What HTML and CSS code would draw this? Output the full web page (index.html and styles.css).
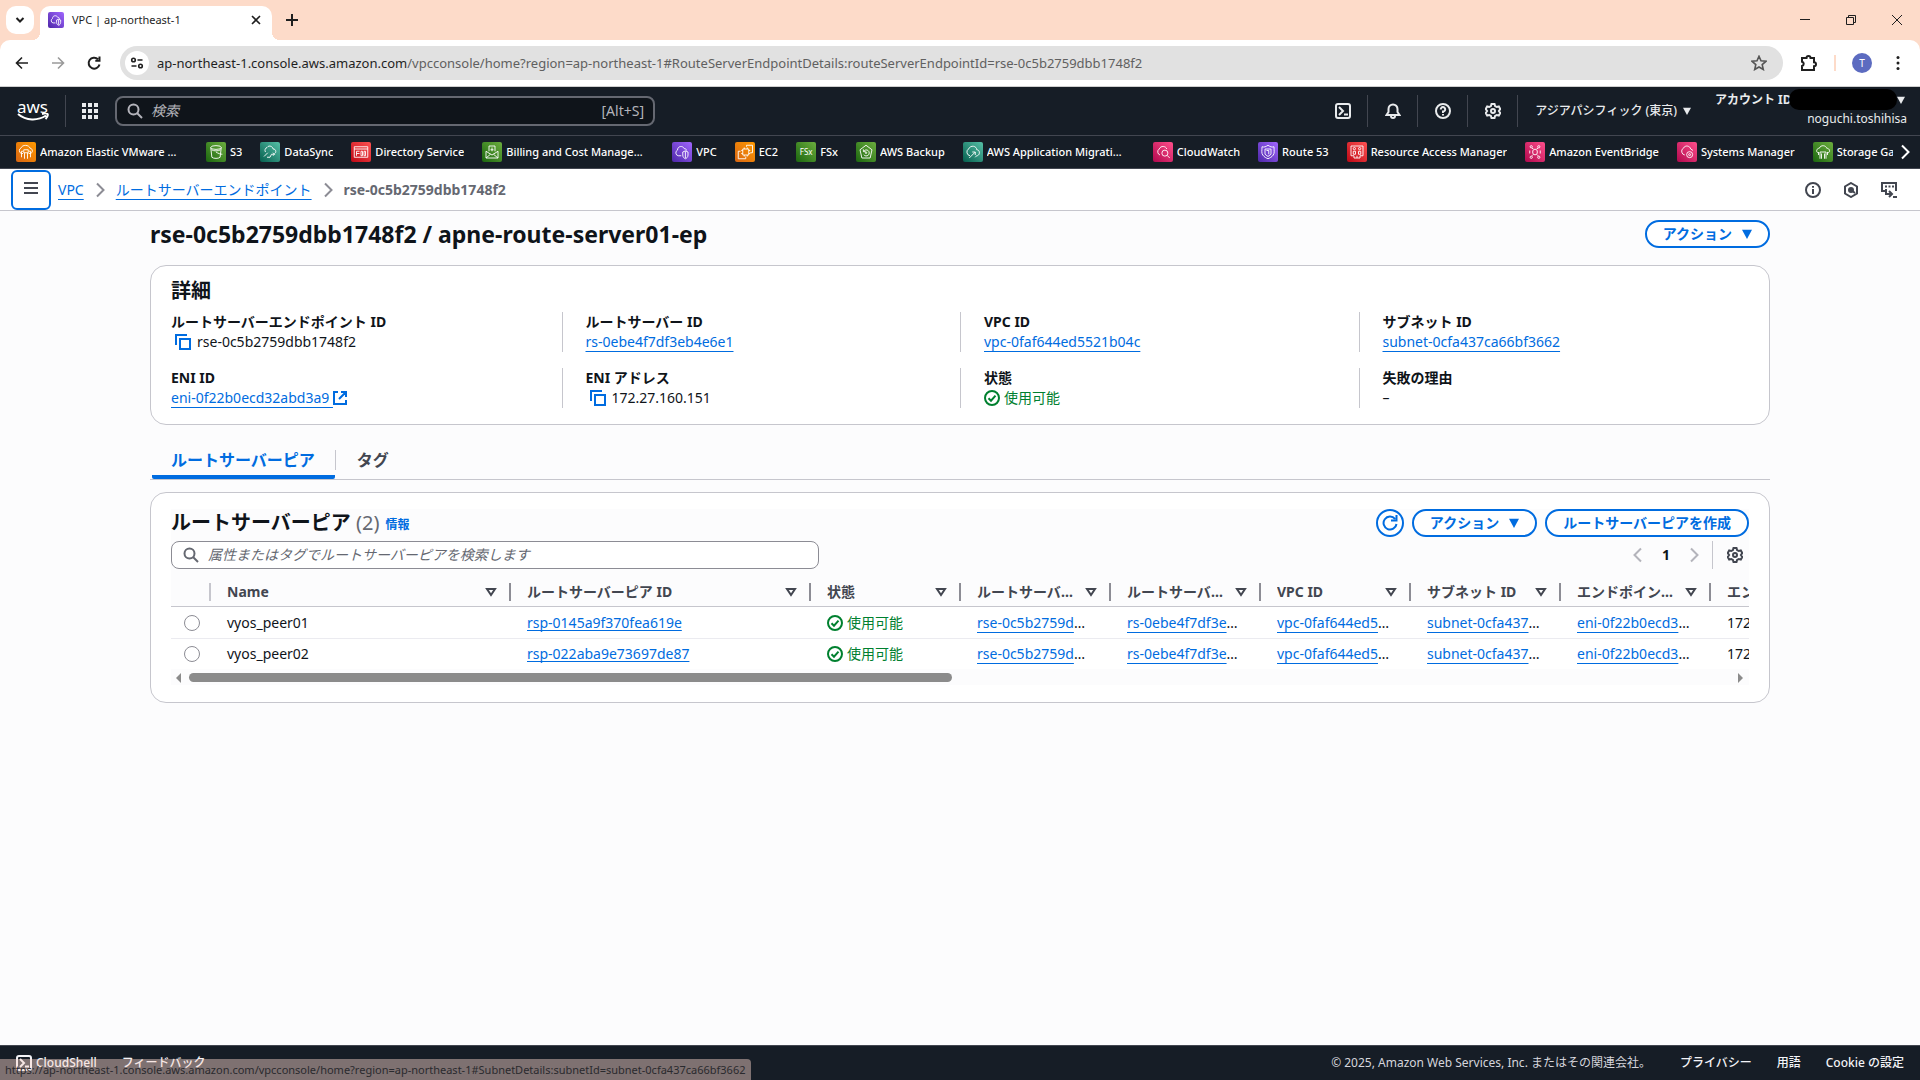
FILE: index.html
```html
<!DOCTYPE html>
<html lang="ja">
<head>
<meta charset="utf-8">
<title>VPC | ap-northeast-1</title>
<link rel="stylesheet" href="styles.css">
</head>
<body>
<svg class="defs" aria-hidden="true">
  <symbol id="search" viewBox="0 0 16 16"><circle cx="6.500" cy="6.500" r="5"/><path d="M10 10l5 5"/></symbol>
  <symbol id="copy" viewBox="0 0 16 16"><path d="M1 11V1h11M5 5h10v10H5z"/></symbol>
  <symbol id="check" viewBox="0 0 16 16"><circle cx="8" cy="8" r="7"/><path d="M4.500 8.200l2.500 2.500 4.500-5"/></symbol>
  <symbol id="gear" viewBox="0 0 16 16"><path d="M6.500 1h3l.6 2 1.700 1 2-.5 1.500 2.600L13.900 8l1.400 1.900-1.500 2.600-2-.5-1.700 1-.6 2h-3l-.6-2-1.700-1-2 .5L.7 9.900 2.100 8 .7 6.100l1.500-2.600 2 .5 1.700-1z"/><circle cx="8" cy="8" r="2"/></symbol>
  <symbol id="shell" viewBox="0 0 16 16"><rect x="1" y="1" width="14" height="14" rx="2"/><path d="M4 4l4 4-4 4M9 11.500h4"/></symbol>
  <symbol id="chev" viewBox="0 0 16 16"><path d="M5 1.500L11.500 8 5 14.500"/></symbol>
  <symbol id="filter" viewBox="0 0 16 16"><path d="M4 5h8L8 11z"/></symbol>
  <symbol id="down" viewBox="0 0 12 12"><path d="M0 1h12L6 12z" fill="currentColor" stroke="none"/></symbol>
  <symbol id="vpc" viewBox="0 0 24 24"><path d="M11 17H7a4 4 0 01-1-7.500C6 4 13 3 15 7.500c2 0 3 1 3 2.500M13 12l3.500-1.500L20 12v4c0 3-2 4.500-3.500 5-1.500-.5-3.500-2-3.500-5zM16.500 11v9"/></symbol>
</svg>

<header class="browser">
  <div class="tabstrip">
    <button class="tab-menu" aria-label="タブを検索"><svg class="i10" viewBox="0 0 10 10"><path d="M1.500 3L5 6.500 8.500 3"/></svg></button>
    <div class="tab">
      <span class="svc purple favicon"><svg viewBox="0 0 24 24"><use href="#vpc"/></svg></span>
      <span class="tab-title">VPC | ap-northeast-1</span>
      <button class="plain" aria-label="閉じる"><svg class="i10 fine" viewBox="0 0 10 10"><path d="M1 1l8 8M9 1L1 9"/></svg></button>
    </div>
    <button class="plain new-tab" aria-label="新しいタブ"><svg class="i12" viewBox="0 0 12 12"><path d="M6 0v12M0 6h12"/></svg></button>
    <div class="window-buttons">
      <button class="plain" aria-label="最小化"><svg class="i12 thin" viewBox="0 0 12 12"><path d="M1 5.500h10"/></svg></button>
      <button class="plain" aria-label="元に戻す"><svg class="i12 thin" viewBox="0 0 12 12"><path d="M1.500 3.500h7v7h-7zM3.500 3.500v-2h7v7h-2"/></svg></button>
      <button class="plain" aria-label="ウィンドウを閉じる"><svg class="i12 thin" viewBox="0 0 12 12"><path d="M1 1l10 10M11 1L1 11"/></svg></button>
    </div>
  </div>
  <div class="toolbar">
    <button class="plain" aria-label="戻る"><svg class="i16 fine" viewBox="0 0 16 16"><path d="M14 8H3M8 2.500L2.500 8 8 13.500"/></svg></button>
    <button class="plain muted" aria-label="進む"><svg class="i16 fine" viewBox="0 0 16 16"><path d="M2 8h11M8 2.500L13.500 8 8 13.500"/></svg></button>
    <button class="plain" aria-label="再読み込み"><svg class="i16" viewBox="0 0 16 16"><path d="M13.500 9.500A5.500 5.500 0 1112 4.200M13.500 1.500v4.200H9.300"/></svg></button>
    <div class="omnibox">
      <span class="site-info"><svg class="i14 fine" viewBox="0 0 14 14"><circle cx="3.500" cy="4" r="1.800"/><path d="M7.500 4h5M1.500 10h5"/><circle cx="10.500" cy="10" r="1.800"/></svg></span>
      <span class="url">ap-northeast-1.console.aws.amazon.com<span class="url-path">/vpcconsole/home?region=ap-northeast-1#RouteServerEndpointDetails:routeServerEndpointId=rse-0c5b2759dbb1748f2</span></span>
      <button class="plain star" aria-label="ブックマーク"><svg class="i16 fine" viewBox="0 0 16 16"><path d="M8 1.300l2 4.500 4.900.5-3.700 3.300 1.100 4.900L8 12l-4.300 2.500 1.100-4.900L1.100 6.300 6 5.800z"/></svg></button>
    </div>
    <button class="plain" aria-label="拡張機能"><svg class="i18" viewBox="0 0 18 18"><path d="M2 4h4.500a2 2 0 014 0H14v4.300a2 2 0 010 4V16H2v-4a2.200 2.200 0 000-4.300z"/></svg></button>
    <span class="bar"></span>
    <span class="avatar">T</span>
    <button class="plain" aria-label="メニュー"><svg class="i16 solid" viewBox="0 0 16 16"><circle cx="8" cy="2.500" r="1.500"/><circle cx="8" cy="8" r="1.500"/><circle cx="8" cy="13.500" r="1.500"/></svg></button>
  </div>
</header>

<nav class="aws-nav">
  <a class="logo" href="#" aria-label="AWS"><span>aws</span><svg viewBox="0 0 32 9"><path d="M1 1c8 7 20 7 28 1.500M25 1c3-.8 5-.6 5.500 0s-.2 3-2 5"/></svg></a>
  <span class="rule"></span>
  <button class="plain apps" aria-label="サービス"><svg class="i16 solid" viewBox="0 0 16 16"><path d="M0 0h4v4H0zM6 0h4v4H6zM12 0h4v4h-4zM0 6h4v4H0zM6 6h4v4H6zM12 6h4v4h-4zM0 12h4v4H0zM6 12h4v4H6zM12 12h4v4h-4z"/></svg></button>
  <label class="nav-search"><svg class="i16"><use href="#search"/></svg><input type="text" placeholder="検索" aria-label="検索"><span>[Alt+S]</span></label>
  <div class="nav-tools">
    <button class="plain" aria-label="CloudShell"><svg class="i16"><use href="#shell"/></svg></button>
    <button class="plain" aria-label="通知"><svg class="i16" viewBox="0 0 16 16"><path d="M1.500 12h13L12.500 9V6a4.500 4.500 0 00-9 0v3zM6 13a2 2 0 004 0"/></svg></button>
    <button class="plain" aria-label="ヘルプ"><svg class="i16" viewBox="0 0 16 16"><circle cx="8" cy="8" r="7"/><path d="M5.800 6.500A2.200 2.200 0 118 8.500V10M8 11v1.600"/></svg></button>
    <button class="plain" aria-label="設定"><svg class="i16"><use href="#gear"/></svg></button>
  </div>
  <button class="plain region">アジアパシフィック (東京) <svg class="i8"><use href="#down"/></svg></button>
  <button class="plain account"><span class="account-id">アカウント ID<span class="mask"></span><svg class="i8"><use href="#down"/></svg></span><span class="user">noguchi.toshihisa</span></button>
</nav>

<nav class="favorites">
  <div class="fav-list">
  <a href="#"><span class="svc orange"><svg viewBox="0 0 24 24"><path d="M8 14H6a4 4 0 01-.5-7.500C7 2 16 2 17.500 7c4 .5 4 6.500 0 7h-2M9 9h6v4H9zM8 11H6v8M16 11h2v8M10 13v8M14 13v8"/></svg></span><span class="name long">Amazon Elastic VMware Service</span></a>
  <a href="#"><span class="svc green"><svg viewBox="0 0 24 24"><ellipse cx="12" cy="6" rx="7" ry="2.500"/><path d="M5 6l1.500 13c2 2 9 2 11 0L19 6M12 12c3 2 6 3 8.500 3M6 9c3 2 9 2 12 0"/></svg></span><span class="name">S3</span></a>
  <a href="#"><span class="svc teal"><svg viewBox="0 0 24 24"><path d="M6 12a4 4 0 012-6c3-4 8-1 8 2 4-.5 5 5 2 6M4 18l5-5M8 19h4l2-4h4M16 13l2 2-2 2"/></svg></span><span class="name">DataSync</span></a>
  <a href="#"><span class="svc red"><svg viewBox="0 0 24 24"><path d="M3 5h18v14H3zM3 8h18M6 11h4M6 14h4M6 11v6M12 11h2v6h-2zM16 11h2v6h-2z"/></svg></span><span class="name">Directory Service</span></a>
  <a href="#"><span class="svc green"><svg viewBox="0 0 24 24"><path d="M4 11v9h16v-9l-8 5zM4 20l6-5M20 20l-6-5M8 11V4h8v7M12 6v5M10 9h4"/></svg></span><span class="name long">Billing and Cost Management</span></a>
  <a href="#"><span class="svc purple"><svg viewBox="0 0 24 24"><use href="#vpc"/></svg></span><span class="name">VPC</span></a>
  <a href="#"><span class="svc orange"><svg viewBox="0 0 24 24"><path d="M9 8h8v8H9zM6 11H3v10h10v-3M14 5V3h8v10h-3M11 6v2M15 6v2M17 10h2M17 14h2M7 10h2M7 14h2M11 16v2M15 16v2"/></svg></span><span class="name">EC2</span></a>
  <a href="#"><span class="svc green fsx">FSx</span><span class="name">FSx</span></a>
  <a href="#"><span class="svc green"><svg viewBox="0 0 24 24"><path d="M12 3l8 6-2.500 11h-11L4 9zM9 11a4 4 0 110 4.500M8.500 8.500v3h3"/><circle cx="12" cy="13" r="1"/></svg></span><span class="name">AWS Backup</span></a>
  <a href="#"><span class="svc teal"><svg viewBox="0 0 24 24"><path d="M8 17a5 5 0 01-2-9c3-6 11-4 11 1 4 0 5 6 1 8M7 20l8-8M11 12h4v4M15 19l3-3"/></svg></span><span class="name long">AWS Application Migration Service</span></a>
  <a href="#"><span class="svc pink"><svg viewBox="0 0 24 24"><path d="M8 16a4.500 4.500 0 01-1-8c2-5 9-4 10 0"/><circle cx="14.500" cy="13.500" r="4"/><path d="M17.500 16.500L21 20"/></svg></span><span class="name">CloudWatch</span></a>
  <a href="#"><span class="svc purple"><svg viewBox="0 0 24 24"><path d="M4 5c3 1 5 0 8-2 3 2 5 3 8 2 0 6 1 8-1 11-2 3-5 4-7 5-2-1-5-2-7-5-2-3-1-5-1-11zM8 8h8v7l-4 3-4-3zM10 10h3v5"/></svg></span><span class="name">Route 53</span></a>
  <a href="#"><span class="svc red"><svg viewBox="0 0 24 24"><path d="M4 4h16v13h-4M4 4v13h4M7 11h3v4H7zM14 11h3v4h-3zM8 17v3h8v-3M12 17v3"/><circle cx="8.500" cy="7.500" r="1.500"/><circle cx="15.500" cy="7.500" r="1.500"/></svg></span><span class="name">Resource Access Manager</span></a>
  <a href="#"><span class="svc pink"><svg viewBox="0 0 24 24"><path d="M9 10l3-2 3 2v4l-3 2-3-2zM8 7l2 1M16 7l-2 1M8 17l2-2M16 17l-2-2M5 10v4M19 10v4"/><circle cx="7" cy="5" r="1.500"/><circle cx="17" cy="5" r="1.500"/><circle cx="7" cy="19" r="1.500"/><circle cx="17" cy="19" r="1.500"/></svg></span><span class="name">Amazon EventBridge</span></a>
  <a href="#"><span class="svc pink"><svg viewBox="0 0 24 24"><path d="M9 16a5 5 0 01-2-9c3-5 9-3 10 1l3 2"/><circle cx="15.500" cy="15.500" r="4"/><circle cx="15.500" cy="15.500" r="1.300"/></svg></span><span class="name">Systems Manager</span></a>
  <a href="#"><span class="svc green"><svg viewBox="0 0 24 24"><path d="M5 13c-3-2-1-6 2-6 2-5 9-4 10 0 4 0 5 5 2 6M8 21V12h8v9M10 14v7M14 14v7M6 12v4M18 12v4"/></svg></span><span class="name">Storage Gateway</span></a>
  </div>
  <button class="plain more" aria-label="さらに表示"><svg class="i16"><use href="#chev"/></svg></button>
</nav>

<div class="crumb-bar">
  <button class="side-toggle" aria-label="メニューを開く"><svg class="i16" viewBox="0 0 16 16"><path d="M1 3h14M1 8h14M1 13h14"/></svg></button>
  <ol class="crumbs">
    <li><a href="#">VPC</a><svg class="i16"><use href="#chev"/></svg></li>
    <li><a href="#">ルートサーバーエンドポイント</a><svg class="i16"><use href="#chev"/></svg></li>
    <li class="here">rse-0c5b2759dbb1748f2</li>
  </ol>
  <div class="crumb-tools">
    <button class="plain" aria-label="情報"><svg class="i16" viewBox="0 0 16 16"><circle cx="8" cy="8" r="7"/><path d="M8 7v5M8 4v1.800"/></svg></button>
    <button class="plain" aria-label="診断"><svg class="i16" viewBox="0 0 16 16"><path d="M8 1l6 3.500v7L8 15l-6-3.500v-7zM8 8l4 3"/><circle cx="8" cy="8" r="2" fill="currentColor"/></svg></button>
    <button class="plain" aria-label="コンソール"><svg class="i16" viewBox="0 0 16 16"><path d="M4 9H1V1h14v8M4 4.500h2M7.500 4.500h2M11 4.500h2M5 7v5h5M8 9l3 3-3 3M12 15h4"/></svg></button>
  </div>
</div>

<main>
  <div class="title-row">
    <h1>rse-0c5b2759dbb1748f2 / apne-route-server01-ep</h1>
    <button class="btn">アクション <svg class="i10"><use href="#down"/></svg></button>
  </div>

  <section class="card details">
    <h2>詳細</h2>
    <dl>
      <div><dt>ルートサーバーエンドポイント ID</dt><dd class="copyable"><svg class="i16"><use href="#copy"/></svg>rse-0c5b2759dbb1748f2</dd></div>
      <div><dt>ルートサーバー ID</dt><dd><a href="#">rs-0ebe4f7df3eb4e6e1</a></dd></div>
      <div><dt>VPC ID</dt><dd><a href="#">vpc-0faf644ed5521b04c</a></dd></div>
      <div><dt>サブネット ID</dt><dd><a href="#">subnet-0cfa437ca66bf3662</a></dd></div>
      <div><dt>ENI ID</dt><dd class="external"><a href="#">eni-0f22b0ecd32abd3a9&nbsp;</a><svg class="i14" viewBox="0 0 14 14"><path d="M5 1H1v12h12V9M8 1h5v5M13 1L6 8"/></svg></dd></div>
      <div><dt>ENI アドレス</dt><dd class="copyable"><svg class="i16"><use href="#copy"/></svg>172.27.160.151</dd></div>
      <div><dt>状態</dt><dd class="ok"><svg class="i16"><use href="#check"/></svg>使用可能</dd></div>
      <div><dt>失敗の理由</dt><dd>–</dd></div>
    </dl>
  </section>

  <div class="tabs" role="tablist">
    <button role="tab" aria-selected="true">ルートサーバーピア</button>
    <button role="tab" aria-selected="false">タグ</button>
  </div>

  <section class="card peers">
    <div class="peers-inner">
    <div class="peers-head">
      <h2>ルートサーバーピア <span class="count">(2)</span></h2>
      <a class="info" href="#">情報</a>
      <div class="actions">
        <button class="btn round" aria-label="更新"><svg class="i16" viewBox="0 0 16 16"><path d="M14.500 9A6.500 6.500 0 1113 3.800M14.500 0v5.500H9"/></svg></button>
        <button class="btn">アクション <svg class="i10"><use href="#down"/></svg></button>
        <button class="btn">ルートサーバーピアを作成</button>
      </div>
    </div>
    <div class="peers-tools">
      <label class="filter"><svg class="i16"><use href="#search"/></svg><input type="text" placeholder="属性またはタグでルートサーバーピアを検索します" aria-label="属性またはタグで検索"></label>
      <div class="pager">
        <button class="plain flip" aria-label="前へ"><svg class="i16"><use href="#chev"/></svg></button>
        <button class="plain page">1</button>
        <button class="plain" aria-label="次へ"><svg class="i16"><use href="#chev"/></svg></button>
        <button class="plain prefs" aria-label="設定"><svg class="i16"><use href="#gear"/></svg></button>
      </div>
    </div>
    <div class="table-wrap">
      <table>
        <colgroup><col class="c-pick"><col class="c-wide"><col class="c-wide"><col class="c-std" span="7"></colgroup>
        <thead><tr>
          <th aria-label="選択"><div class="hd first"></div></th>
          <th><div class="hd"><span>Name</span><svg class="i16"><use href="#filter"/></svg></div></th>
          <th><div class="hd"><span>ルートサーバーピア ID</span><svg class="i16"><use href="#filter"/></svg></div></th>
          <th><div class="hd"><span>状態</span><svg class="i16"><use href="#filter"/></svg></div></th>
          <th><div class="hd"><span>ルートサーバーエンドポイント ID</span><svg class="i16"><use href="#filter"/></svg></div></th>
          <th><div class="hd"><span>ルートサーバー ID</span><svg class="i16"><use href="#filter"/></svg></div></th>
          <th><div class="hd"><span>VPC ID</span><svg class="i16"><use href="#filter"/></svg></div></th>
          <th><div class="hd"><span>サブネット ID</span><svg class="i16"><use href="#filter"/></svg></div></th>
          <th><div class="hd"><span>エンドポイント ENI</span><svg class="i16"><use href="#filter"/></svg></div></th>
          <th><div class="hd"><span>エンドポイント ENI アドレス</span></div></th>
        </tr></thead>
        <tbody>
          <tr>
            <td class="pick"><input type="radio" name="peer" aria-label="vyos_peer01"></td>
            <td>vyos_peer01</td><td><a class="tight" href="#">rsp-0145a9f370fea619e</a></td>
            <td><span class="ok"><svg class="i16"><use href="#check"/></svg>使用可能</span></td>
            <td><a href="#">rse-0c5b2759dbb1748f2</a></td><td><a href="#">rs-0ebe4f7df3eb4e6e1</a></td><td><a href="#">vpc-0faf644ed5521b04c</a></td><td><a href="#">subnet-0cfa437ca66bf3662</a></td><td><a href="#">eni-0f22b0ecd32abd3a9</a></td><td>172.27.160.151</td>
          </tr>
          <tr>
            <td class="pick"><input type="radio" name="peer" aria-label="vyos_peer02"></td>
            <td>vyos_peer02</td><td><a class="tight" href="#">rsp-022aba9e73697de87</a></td>
            <td><span class="ok"><svg class="i16"><use href="#check"/></svg>使用可能</span></td>
            <td><a href="#">rse-0c5b2759dbb1748f2</a></td><td><a href="#">rs-0ebe4f7df3eb4e6e1</a></td><td><a href="#">vpc-0faf644ed5521b04c</a></td><td><a href="#">subnet-0cfa437ca66bf3662</a></td><td><a href="#">eni-0f22b0ecd32abd3a9</a></td><td>172.27.160.151</td>
          </tr>
        </tbody>
      </table>
    </div>
    <div class="scrollbar"><span class="arrow left"></span><div class="track"><div class="thumb"></div></div><span class="arrow right"></span></div>
    </div>
  </section>
</main>

<footer>
  <a class="shell" href="#"><svg class="i16"><use href="#shell"/></svg>CloudShell</a>
  <a href="#">フィードバック</a>
  <span class="copyright">© 2025, Amazon Web Services, Inc. またはその関連会社。</span>
  <a href="#">プライバシー</a>
  <a href="#">用語</a>
  <a href="#">Cookie の設定</a>
  <div class="status">https://ap-northeast-1.console.aws.amazon.com/vpcconsole/home?region=ap-northeast-1#SubnetDetails:subnetId=subnet-0cfa437ca66bf3662</div>
</footer>
</body>
</html>
```
FILE: styles.css
```css
* { box-sizing: border-box; }
body {
  margin: 0;
  min-height: 100vh;
  display: flex;
  flex-direction: column;
  background: #fcfcfd;
  color: #0f141a;
  font: 14px/20px "Noto Sans", "Noto Sans CJK JP", sans-serif;
  overflow-x: hidden;
}
button, input { font: inherit; color: inherit; margin: 0; }
h1, h2, dl, dd, ol { margin: 0; padding: 0; }
a { color: #006ce0; text-underline-offset: 4px; text-decoration-thickness: 1px; text-decoration-skip-ink: none; }
svg { display: block; flex: none; fill: none; stroke: currentColor; stroke-width: 2; }
.defs { position: absolute; width: 0; height: 0; }
.i8 { width: 8px; height: 8px; }
.i10 { width: 10px; height: 10px; }
.i12 { width: 12px; height: 12px; }
.i14 { width: 14px; height: 14px; }
.i16 { width: 16px; height: 16px; }
.i18 { width: 18px; height: 18px; }
.thin { stroke-width: 1; }
.fine { stroke-width: 1.6; }
.solid { fill: currentColor; stroke: none; }
.plain { display: flex; align-items: center; justify-content: center; background: none; border: 0; padding: 0; }

/* Browser window */
.browser { background: #fddbc9; color: #1f1f1f; font-family: "Noto Sans", sans-serif; }
.tabstrip { display: flex; align-items: center; height: 40px; padding-left: 6px; }
.tab-menu { width: 28px; height: 28px; border: 0; border-radius: 10px; background: #fff; display: flex; align-items: center; justify-content: center; padding: 0; }
.tab { position: relative; display: flex; align-items: center; width: 232px; height: 34px; margin: 6px 0 0 6px; padding: 0 11px 6px 8px; background: #fff; border-radius: 10px 10px 0 0; font-size: 11px; }
.tab::before, .tab::after { content: ""; position: absolute; bottom: 0; width: 8px; height: 8px; }
.tab::before { right: 100%; background: radial-gradient(circle at 0 0, transparent 8px, #fff 8px); }
.tab::after { left: 100%; background: radial-gradient(circle at 100% 0, transparent 8px, #fff 8px); }
.tab-title { flex: 1; padding-left: 8px; }
.new-tab { width: 40px; }
.window-buttons { display: flex; margin-left: auto; }
.window-buttons .plain { width: 46px; height: 40px; }
.toolbar { display: flex; align-items: center; height: 47px; background: #fff; border-radius: 10px 10px 0 0; border-bottom: 1px solid #cfcfcf; padding: 0 14px; }
.toolbar > .plain { width: 16px; margin-right: 20px; }
.toolbar .muted { color: #9a9a9a; }
.omnibox { flex: 1; min-width: 0; display: flex; align-items: center; height: 34px; border-radius: 17px; background: #e1e1e1; padding: 0 16px 0 5px; margin: 0 18px 0 -2px; }
.site-info { display: flex; align-items: center; justify-content: center; width: 24px; height: 24px; border-radius: 50%; background: #fff; margin-right: 8px; }
.url { flex: 1; white-space: nowrap; overflow: hidden; font-size: 13px; }
.url-path { color: #606060; }
.star { color: #555; }
.toolbar .bar { width: 2px; height: 16px; background: #fddbc9; margin: 0 16px 0 -3px; }
.avatar { width: 20px; height: 20px; border-radius: 50%; background: #5c6bc0; color: #fff; font-size: 10px; text-align: center; margin-right: 18px; }
.toolbar > .plain:last-child { margin-right: 0; }

/* Console navigation */
.aws-nav { display: flex; align-items: center; height: 49px; background: #161d26; color: #e9ebed; border-bottom: 1px solid #424650; padding: 0 13px 0 16px; }
.logo { display: flex; flex-direction: column; align-items: center; width: 33px; color: #fff; text-decoration: none; font-size: 17px; line-height: 12px; }
.logo svg { width: 32px; height: 9px; }
.rule { width: 1px; height: 32px; background: #424650; margin: 0 16px; }
.nav-search { display: flex; align-items: center; flex: 0 1 540px; height: 30px; margin-left: 17px; padding: 0 9px 0 10px; gap: 8px; background: #0f141a; border: 2px solid #656871; border-radius: 8px; color: #b4b4bb; }
.nav-search input, .filter input { flex: 1; min-width: 0; background: none; border: 0; padding: 0; outline: 0; }
::placeholder { color: inherit; opacity: 1; font-style: italic; }
.nav-tools { display: flex; margin-left: auto; }
.nav-tools .plain { width: 50px; height: 32px; border-right: 1px solid #424650; }
.region { gap: 6px; margin-left: 17px; font-size: 12px; font-weight: 500; white-space: nowrap; }
.account { flex-direction: column; align-items: flex-end; margin-left: 24px; width: 192px; padding-bottom: 4px; font-size: 12px; line-height: 19px; }
.account-id { position: relative; display: flex; align-items: center; justify-content: space-between; width: 100%; padding-right: 2px; font-weight: 700; }
.mask { position: absolute; left: 74px; right: 10px; height: 21px; border-radius: 10px; background: #000; }

.favorites { display: flex; align-items: center; height: 33px; background: #161d26; border-bottom: 1px solid #424650; padding: 0 7px 0 16px; }
.fav-list { display: flex; flex: 1; min-width: 0; gap: 18px; overflow: hidden; }
.favorites a { display: flex; flex: none; align-items: center; gap: 4px; color: #fff; text-decoration: none; font-size: 11px; font-weight: 500; }
.name { overflow: hidden; text-overflow: ellipsis; white-space: nowrap; }
.long { width: 148px; padding-right: 8px; }
.svc { width: 20px; height: 20px; padding: 1px; border-radius: 2px; color: #fff; }
.svc svg { width: 18px; height: 18px; stroke-width: 1.2; }
.favicon { width: 16px; height: 16px; }
.favicon svg { width: 14px; height: 14px; stroke-width: 1.5; }
.fsx { font-size: 8px; font-weight: 400; line-height: 18px; text-align: center; }
.orange { background: linear-gradient(45deg, #d86613, #ff9900); }
.green { background: linear-gradient(45deg, #1b660f, #6cae3e); }
.teal { background: linear-gradient(45deg, #055f4e, #56c0a7); }
.red { background: linear-gradient(45deg, #bd0816, #ff5252); }
.purple { background: linear-gradient(45deg, #4d27a8, #a166ff); }
.pink { background: linear-gradient(45deg, #b0084d, #ff4f8b); }
.more { color: #fff; margin-left: 4px; }

/* Breadcrumbs */
.crumb-bar { display: flex; align-items: center; height: 42px; background: #fff; border-bottom: 1px solid #c6c6cd; padding: 0 23px 0 11px; }
.side-toggle { width: 40px; height: 40px; border: 2px solid #006ce0; border-radius: 6px; background: #fff; color: #424650; display: flex; align-items: center; justify-content: center; padding: 0 0 4px; }
.crumbs { display: flex; list-style: none; padding-left: 7px; }
.crumbs li { display: flex; align-items: center; }
.crumbs svg { margin: 0 8px; color: #8c8c94; }
.here { font-weight: 700; color: #656871; }
.crumb-tools { display: flex; gap: 22px; margin-left: auto; color: #424650; }

/* Content */
main { flex: 1; width: 100%; max-width: 1660px; margin: 0 auto; padding: 9px 20px 24px; }
.title-row { display: flex; align-items: center; justify-content: space-between; height: 28px; }
h1 { font-size: 23px; line-height: 28px; }
h2 { font-size: 20px; line-height: 24px; }
.btn { display: flex; align-items: center; gap: 10px; height: 28px; padding: 0 16px; border: 2px solid #006ce0; border-radius: 14px; background: #fff; color: #006ce0; font-weight: 700; white-space: nowrap; }
.round { width: 28px; padding: 0; justify-content: center; }
.card { background: #fff; border: 1px solid #c6c6cd; border-radius: 16px; }
.details { margin-top: 17px; padding: 13px 12px 16px; }
.details h2 { padding-left: 8px; }
dl { display: grid; grid-template-columns: repeat(4, 1fr); row-gap: 16px; margin-top: 9px; }
dl > div { height: 40px; border-left: 1px solid #c6c6cd; padding-left: 23px; }
dl > div:nth-child(4n+1) { border-color: transparent; padding-left: 7px; }
dt { font-weight: 700; }
dd { display: flex; align-items: center; }
.copyable { padding-left: 4px; gap: 6px; }
.copyable svg { color: #006ce0; }
.external svg { color: #006ce0; }
.ok { display: flex; align-items: center; gap: 4px; color: #00802f; }

.tabs { display: flex; border-bottom: 1px solid #c6c6cd; margin-top: 19px; padding-left: 2px; height: 36px; }
.tabs button { position: relative; border: 0; background: none; padding: 0 20px 4px 19px; font-size: 16px; font-weight: 700; color: #424650; }
.tabs button + button { padding-left: 22px; }
.tabs [aria-selected="true"] { color: #006ce0; border-bottom: 4px solid #006ce0; border-radius: 2px; padding-bottom: 0; }
.tabs [aria-selected="true"]::after { content: ""; position: absolute; right: -1px; top: 6px; width: 1px; height: 20px; background: #c6c6cd; }

.peers { margin-top: 12px; padding: 16px 20px 17px; }
.peers-inner { background: #fcfcfd; }
.peers-head { display: flex; align-items: center; height: 28px; }
.count { font-weight: 400; color: #656871; }
.info { margin: 4px 0 0 6px; font-size: 12px; font-weight: 700; text-decoration: none; }
.actions { display: flex; gap: 8px; margin-left: auto; }
.peers-tools { display: flex; align-items: center; justify-content: space-between; height: 28px; margin-top: 4px; }
.filter { display: flex; align-items: center; gap: 9px; flex: 0 1 648px; height: 28px; padding: 0 11px; border: 1px solid #8c8c94; border-radius: 8px; background: #fff; color: #656871; }
.pager { display: flex; align-items: center; gap: 12px; height: 28px; padding-right: 6px; color: #b4b4bb; }
.pager .page { width: 16px; color: #0f141a; font-weight: 700; }
.flip { transform: scaleX(-1); }
.prefs { height: 28px; padding-left: 14px; margin-left: -2px; border-left: 1px solid #c6c6cd; color: #424650; }
.table-wrap { overflow: hidden; margin-top: 9px; }
table { table-layout: fixed; border-collapse: separate; border-spacing: 0; width: 1690px; }
.c-pick { width: 40px; }
.c-wide { width: 300px; }
.c-std { width: 150px; }
th { height: 29px; padding: 0; text-align: left; color: #424650; border-bottom: 1px solid #c6c6cd; }
.hd { display: flex; align-items: center; justify-content: space-between; gap: 6px; height: 18px; padding: 0 10px 0 16px; border-right: 2px solid #8c8c94; }
.hd.first { border-color: #c6c6cd; }
.hd span { line-height: 20px; overflow: hidden; text-overflow: ellipsis; white-space: nowrap; }
td { height: 30px; padding: 0 20px 0 16px; background: #fff; overflow: hidden; text-overflow: ellipsis; white-space: nowrap; }
tbody tr:first-child td { height: 32px; border-bottom: 1px solid #ebebf0; }
.pick { padding: 0 0 0 13px; }
.pick input { appearance: none; display: block; width: 16px; height: 16px; border: 1px solid #8c8c94; border-radius: 50%; background: #fff; }
.tight { text-underline-offset: 2px; }
.scrollbar { display: flex; align-items: center; gap: 8px; height: 16px; padding: 1px 6px 0 5px; }
.arrow { border: 5px solid transparent; border-left-width: 0; border-right: 5px solid #8b8b8b; }
.arrow.right { border-right-width: 0; border-left: 5px solid #8b8b8b; }
.track { flex: 1; }
.thumb { width: 49.5%; height: 9px; border-radius: 5px; background: #8b8b8b; }

footer { position: relative; display: flex; align-items: center; gap: 25px; height: 35px; background: #161d26; border-top: 1px solid #424650; padding: 0 16px; font-size: 12px; font-weight: 500; }
footer a { color: #f3f3f7; text-decoration: none; }
.shell { display: flex; align-items: center; gap: 4px; }
.copyright { margin-left: auto; margin-right: 4px; color: #d5d5dc; font-weight: 400; }
.status { position: absolute; left: 0; bottom: 0; height: 21px; padding: 0 6px 0 5px; border-radius: 0 4px 0 0; background: rgba(252, 218, 206, .45); color: #2a2a2e; font-size: 11px; font-weight: 400; line-height: 21px; white-space: nowrap; }
```
